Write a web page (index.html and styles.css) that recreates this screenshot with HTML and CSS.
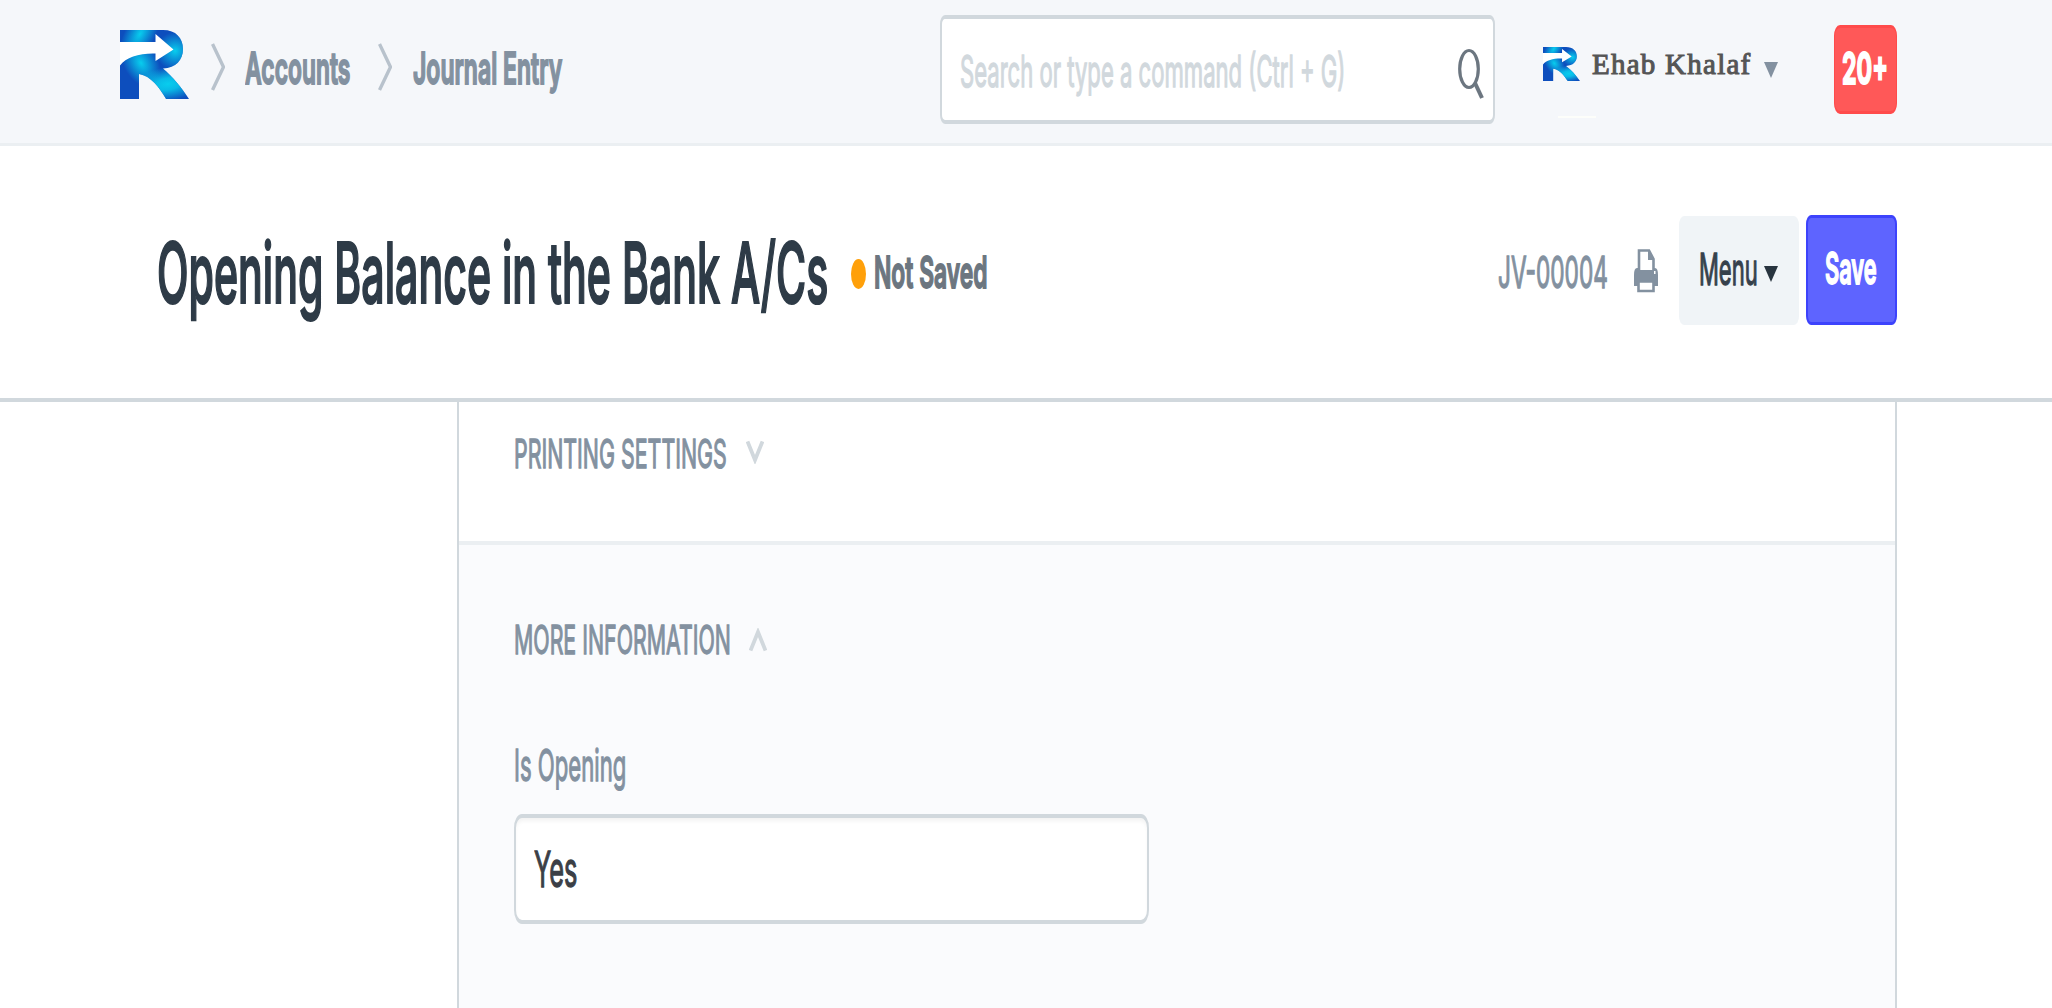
FILE: index.html
```html
<!DOCTYPE html>
<html lang="en">
<head>
<meta charset="utf-8">
<title>Opening Balance in the Bank A/Cs</title>
<link rel="stylesheet" href="styles.css">
</head>
<body>
<svg class="defs" width="0" height="0">
  <defs>
    <radialGradient id="glowTop" gradientUnits="userSpaceOnUse" cx="0" cy="0" r="1" gradientTransform="translate(20 4) rotate(30) scale(15 30)">
      <stop offset="0" stop-color="#08cdee"/><stop offset="1" stop-color="#08cdee" stop-opacity="0"/>
    </radialGradient>
    <radialGradient id="glowBowl" gradientUnits="userSpaceOnUse" cx="55" cy="21" r="19">
      <stop offset="0" stop-color="#08cdee"/><stop offset="1" stop-color="#08cdee" stop-opacity="0"/>
    </radialGradient>
    <radialGradient id="glowStem" gradientUnits="userSpaceOnUse" cx="0" cy="0" r="1" gradientTransform="translate(21 33) rotate(-30) scale(17 26)">
      <stop offset="0" stop-color="#08cdee"/><stop offset="1" stop-color="#08cdee" stop-opacity="0"/>
    </radialGradient>
    <radialGradient id="glowLeg" gradientUnits="userSpaceOnUse" cx="0" cy="0" r="1" gradientTransform="translate(48 54) rotate(-8) scale(36 17)">
      <stop offset="0" stop-color="#08cdee"/><stop offset=".35" stop-color="#08cdee" stop-opacity=".85"/><stop offset="1" stop-color="#08cdee" stop-opacity="0"/>
    </radialGradient>
    <clipPath id="letter">
      <path d="M0 0H43C56 0 63 8 63 19C63 30 56 38 43 38.500C53 47 61 57 69 69H46C39 57 31 46 19 44V69H0Z"/>
    </clipPath>
    <symbol id="brand" viewBox="0 0 69 69" preserveAspectRatio="none">
      <g clip-path="url(#letter)">
        <path fill="#0d4ebd" d="M0 0H69V69H0Z"/>
        <path fill="url(#glowTop)" d="M0 0H69V12H0Z"/>
        <path fill="url(#glowBowl)" d="M30 0H69V40H30Z"/>
        <path fill="url(#glowStem)" d="M0 12H69V69H0Z"/>
        <path fill="url(#glowLeg)" d="M19 30H69V69H19Z"/>
      </g>
      <path fill="#fff" d="M0 12H35.500V4L53.500 19.500L35.500 31V23.500C20 23 6 27 0 35.500Z"/>
    </symbol>
  </defs>
</svg>

<header class="navbar">
  <svg class="logo"><use href="#brand"/></svg>
  <svg class="crumb-arrow" viewBox="0 0 14 48"><path d="M1.500 1L12.500 24L1.500 47"/></svg>
  <a class="label crumb-accounts"><span>Accounts</span></a>
  <svg class="crumb-arrow second" viewBox="0 0 14 48"><path d="M1.500 1L12.500 24L1.500 47"/></svg>
  <a class="label crumb-journal"><span>Journal Entry</span></a>
  <div class="search">
    <div class="label search-hint"><span>Search or type a command (Ctrl + G)</span></div>
    <svg class="search-icon" viewBox="0 0 26 52"><ellipse cx="11" cy="21" rx="9.300" ry="18.500"/><path class="handle" d="M17 35L24 50"/></svg>
  </div>
  <div class="account">
    <svg class="avatar"><use href="#brand"/></svg>
    <i class="avatar-line"></i>
  </div>
  <div class="user-name">Ehab Khalaf</div>
  <i class="caret user-caret"></i>
  <div class="badge"><div class="label badge-count"><span>20+</span></div></div>
</header>

<section class="page-head">
  <h1 class="label title"><span>Opening Balance in the Bank A/Cs</span></h1>
  <i class="dot"></i>
  <div class="label status"><span>Not Saved</span></div>
  <div class="label doc-id"><span>JV-00004</span></div>
  <svg class="printer" viewBox="0 0 24 45">
    <path class="sheet" d="M5 22V2.500H15L19.500 11V22"/>
    <path class="solid" d="M14 2L20 12H14Z"/>
    <path class="solid" d="M0 27Q0 20 3 20H4V22H20V20H21Q24 20 24 27V38H0Z"/>
    <path class="tray" d="M4.500 33.500H19.500V43H4.500Z"/>
    <path fill="#fff" d="M20 23H21.500V26H20Z"/>
  </svg>
  <div class="menu"><div class="label menu-text"><span>Menu</span></div><i class="caret menu-caret"></i></div>
  <div class="save"><div class="label save-text"><span>Save</span></div></div>
</section>

<main class="form">
  <section class="printing">
    <div class="label printing-text"><span>PRINTING SETTINGS</span></div>
    <svg class="fold" viewBox="0 0 18 24"><path d="M1.500 1.500L9 20L16.500 1.500"/></svg>
  </section>
  <section class="more">
    <div class="more-head">
      <div class="label more-text"><span>MORE INFORMATION</span></div>
      <svg class="fold up" viewBox="0 0 18 24"><path d="M1.500 22.500L9 4L16.500 22.500"/></svg>
    </div>
    <div class="label field-text"><span>Is Opening</span></div>
    <div class="field"><div class="label value"><span>Yes</span></div></div>
  </section>
</main>
</body>
</html>
```
FILE: styles.css
```css
* { box-sizing: border-box; }
body {
  margin: 0;
  height: 1008px;
  overflow: hidden;
  display: flex;
  flex-direction: column;
  background: #fff;
  font-family: Inter, "Liberation Sans", sans-serif;
}
svg, i { display: block; flex: none; }
.defs { position: absolute; }

/* condensed text: the box keeps the drawn width, the span is squeezed into it */
.label {
  flex: none;
  height: 1em;
  margin: 0;
  font-size: 44px;
  line-height: 1;
  font-weight: 400;
  white-space: nowrap;
}
.label span {
  display: inline-block;
  transform-origin: 0 0;
  -webkit-text-stroke: 1.3px;
}

.navbar {
  flex: none;
  display: flex;
  align-items: flex-start;
  height: 146px;
  padding-left: 120px;
  background: #f5f7fa;
  border-bottom: 3px solid #ebeff2;
}
.logo { width: 69px; height: 69px; margin-top: 30px; }
.crumb-arrow { width: 14px; height: 48px; margin: 43px 0 0 22px; fill: none; stroke: #b8c2cc; stroke-width: 3.4; }
.crumb-arrow.second { margin-left: 27px; }
.crumb-accounts, .crumb-journal { margin-top: 46px; font-weight: 600; color: #8391a0; }
.crumb-accounts { width: 106px; margin-left: 20px; }
.crumb-accounts span { transform: scaleX(.52); -webkit-text-stroke-width: 2px; }
.crumb-journal { width: 149px; margin-left: 21px; }
.crumb-journal span { transform: scaleX(.5235); -webkit-text-stroke-width: 2px; }

.search {
  flex: none;
  display: flex;
  width: 555px;
  height: 109px;
  margin: 15px 0 0 378px;
  padding-left: 18px;
  background: #fff;
  border: solid #d1d8dd;
  border-width: 4px 2px;
  border-radius: 5px / 9px;
}
.search-hint { width: 385px; margin-top: 30px; color: #d1d8dd; }
.search-hint span { transform: scaleX(.502); }
.search-icon { width: 26px; height: 52px; margin: 29px 0 0 113px; fill: none; stroke: #6c7680; stroke-width: 3.2; }
.search-icon .handle { stroke-width: 4; }

.account { flex: none; width: 55px; margin: 47px 0 0 48px; }
.avatar { width: 37px; height: 34px; }
.avatar-line { width: 38px; height: 2px; margin: 35px 0 0 15px; background: #fdfefa; }
.user-name {
  flex: none;
  width: 160px;
  margin: 48px 0 0 -6px;
  font: 400 29px/32px "Liberation Serif", serif;
  letter-spacing: 1.25px;
  color: #555;
  -webkit-text-stroke: 1px;
  white-space: nowrap;
}
.caret { width: 14px; height: 16px; background: #8391a0; clip-path: polygon(0 0, 100% 0, 50% 100%); }
.user-caret { margin: 62px 0 0 12px; }
.badge {
  flex: none;
  width: 63px;
  height: 89px;
  margin: 25px 0 0 56px;
  padding: 18px 0 0 7px;
  background: #ff5858;
  border: solid #ff4b4b;
  border-width: 3px 1px;
  border-radius: 6px / 11px;
}
.badge-count { font-weight: 700; color: #fff; }
.badge-count span { transform: scaleX(.525); -webkit-text-stroke-width: 2px; }

.page-head {
  flex: none;
  display: flex;
  align-items: flex-start;
  height: 256px;
  padding-left: 157px;
  border-bottom: 4px solid #d1d8dd;
}
.title { width: 679px; margin-top: 85px; font-size: 84px; font-weight: 500; color: #2e3b47; }
.title span { transform: scaleX(.4895); -webkit-text-stroke-width: 2.2px; }
.dot { width: 15px; height: 30px; margin: 113px 0 0 15px; border-radius: 50%; background: #ffa00a; }
.status { width: 113px; margin: 104px 0 0 8px; font-weight: 600; color: #6c7680; }
.status span { transform: scaleX(.52); -webkit-text-stroke-width: 1.8px; }
.doc-id { width: 110px; margin: 104px 0 0 511px; color: #8391a0; }
.doc-id span { transform: scaleX(.516); }
.printer { width: 24px; height: 45px; margin: 102px 0 0 26px; }
.printer .solid { fill: #8391a0; }
.printer .sheet { fill: #fff; stroke: #8391a0; stroke-width: 2.6; }
.printer .tray { fill: #fff; stroke: #8391a0; stroke-width: 2.6; }
.menu {
  flex: none;
  display: flex;
  width: 120px;
  height: 109px;
  margin: 70px 0 0 21px;
  padding-left: 20px;
  background: #f0f4f7;
  border-radius: 5px / 9px;
}
.menu-text { width: 65px; margin-top: 31px; color: #36414c; }
.menu-text span { transform: scaleX(.5); }
.menu-caret { margin-top: 50px; background: #28343f; }
.save {
  flex: none;
  width: 91px;
  height: 110px;
  margin: 69px 0 0 7px;
  padding: 28px 0 0 17px;
  background: #5e64ff;
  border: solid #3d43fc;
  border-width: 3px 2px;
  border-radius: 5px / 9px;
}
.save-text { font-weight: 600; color: #fff; }
.save-text span { transform: scaleX(.496); -webkit-text-stroke-width: 1.8px; }

.form {
  flex: 1;
  display: flex;
  flex-direction: column;
  width: 1440px;
  margin-left: 457px;
  border: solid #d1d8dd;
  border-width: 0 2px;
}
.printing {
  flex: none;
  display: flex;
  height: 143px;
  padding: 32px 0 0 55px;
  border-bottom: 4px solid #ebeff2;
}
.printing-text, .more-text { font-size: 40px; color: #8391a0; }
.printing-text { width: 232px; }
.printing-text span { transform: scaleX(.535); }
.fold { width: 18px; height: 24px; margin-top: 6px; fill: none; stroke: #d1d8dd; stroke-width: 3.8; }
.more { flex: 1; background: #fafbfd; padding: 75px 0 0 55px; }
.more-head { display: flex; height: 123px; }
.more-text { width: 235px; }
.more-text span { transform: scaleX(.534); }
.up { margin-top: 8px; }
.field-text { color: #8391a0; }
.field-text span { transform: scaleX(.503); }
.field {
  width: 635px;
  height: 110px;
  margin-top: 27px;
  padding: 27px 0 0 18px;
  background: #fff;
  border: solid #d1d8dd;
  border-width: 4px 2px;
  border-radius: 8px / 14px;
  box-shadow: inset 0 4px 4px -1px rgba(0, 0, 0, .05);
}
.value { font-size: 49px; color: #3b3f46; }
.value span { transform: scaleX(.518); }
```
